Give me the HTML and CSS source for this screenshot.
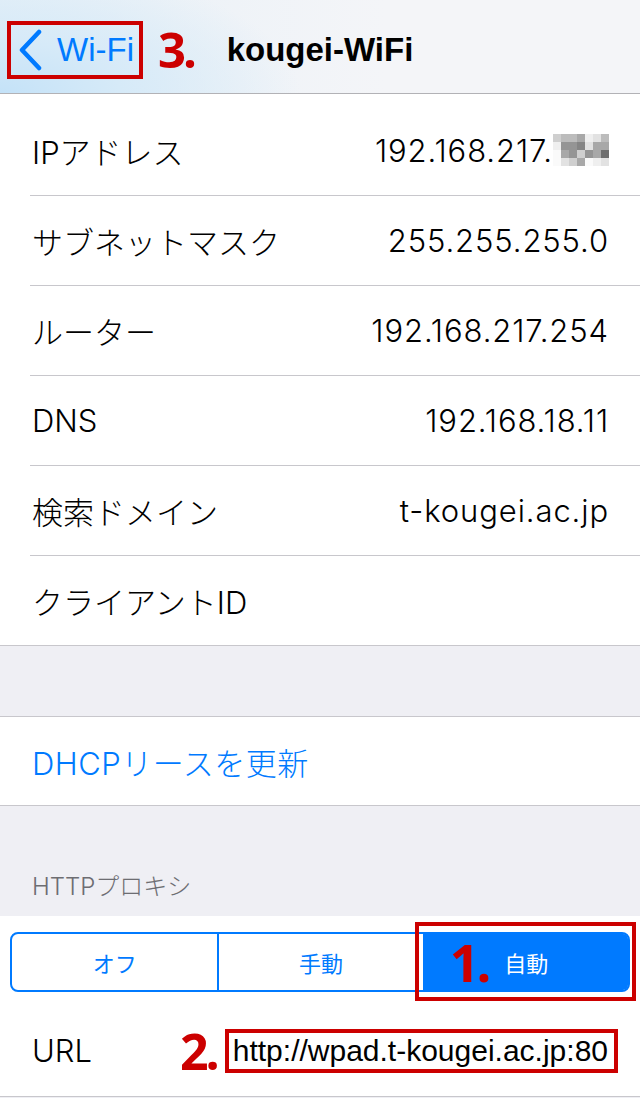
FILE: index.html
```html
<!DOCTYPE html>
<html lang="ja">
<head>
    <meta charset="UTF-8" />
    <title>kougei-WiFi</title>
    <link rel="stylesheet" href="styles.css">
</head>
<body>
    <header class="navbar">
        <div class="nav-left">
            <a class="back" href="#">
                <svg class="chevron" width="26" height="42" viewBox="0 0 26 42">
                    <path d="M22 3 L5 21 L22 39" fill="none" stroke="#007aff" stroke-width="4.5" stroke-linecap="round" stroke-linejoin="round"/>
                </svg>
                <span>Wi-Fi</span>
            </a>
            <span class="step step-nav">3.</span>
        </div>
        <h1 class="nav-title">kougei-WiFi</h1>
        <div></div>
    </header>

    <section class="group info">
        <div class="row">
            <span class="label">IPアドレス</span>
            <span class="value">192.168.217.<span class="mosaic">
                <i class="g2"></i><i class="g3"></i><i class="g3"></i><i class="g4"></i><i class="g0"></i><i class="g1"></i><i class="g3"></i>
                <i class="g0"></i><i class="g5"></i><i class="g5"></i><i class="g6"></i><i class="g1"></i><i class="g4"></i><i class="g4"></i>
                <i class="gw"></i><i class="g4"></i><i class="g5"></i><i class="g2"></i><i class="g5"></i><i class="g4"></i><i class="g7"></i>
                <i class="gw"></i><i class="g1"></i><i class="g2"></i><i class="g4"></i><i class="gw"></i><i class="g0"></i><i class="g1"></i>
            </span></span>
        </div>
        <div class="row">
            <span class="label">サブネットマスク</span>
            <span class="value">255.255.255.0</span>
        </div>
        <div class="row">
            <span class="label">ルーター</span>
            <span class="value">192.168.217.254</span>
        </div>
        <div class="row">
            <span class="label">DNS</span>
            <span class="value">192.168.18.11</span>
        </div>
        <div class="row">
            <span class="label">検索ドメイン</span>
            <span class="value">t-kougei.ac.jp</span>
        </div>
        <div class="row">
            <span class="label">クライアントID</span>
            <span class="value"></span>
        </div>
    </section>

    <section class="group action">
        <div class="row link">DHCPリースを更新</div>
    </section>

    <h2 class="section-header">HTTPプロキシ</h2>

    <section class="group proxy">
        <div class="segment-wrap">
            <div class="segmented">
                <div class="seg">オフ</div>
                <div class="seg">手動</div>
                <div class="seg selected">
                    自動
                    <div class="mark-box"><span class="step step-one">1.</span></div>
                </div>
            </div>
        </div>
        <div class="row url">
            <span class="label">URL</span>
            <span class="url-value">
                <span class="step step-two">2.</span>
                <span class="url-box">http://wpad.t-kougei.ac.jp:80</span>
            </span>
        </div>
    </section>
</body>
</html>
```

FILE: styles.css
```css
body{
    margin:0;
    width:640px;
    background:#efeff4;
    font-family:Inter, "Noto Sans CJK JP", sans-serif;
    color:#000;
}

/* ナビゲーションバー */
.navbar{
    height:94px;
    box-sizing:border-box;
    padding-top:6px;
    display:grid;
    grid-template-columns:1fr auto 1fr;
    align-items:center;
    border-bottom:1px solid #b2b2b6;
    background:
        radial-gradient(ellipse 300px 130px at 0% 100%, #c4e2f8 0%, #d6eaf8 40%, rgba(236,242,247,0) 100%),
        linear-gradient(to right, #e7f0f7, #f4f5f8 60%);
}
.nav-left{
    display:flex;
    align-items:center;
    padding-left:7px;
}
.back{
    display:flex;
    align-items:center;
    height:58px;
    box-sizing:border-box;
    border:4px solid #cc0000;
    padding:0 5px 0 6px;
    color:#007aff;
    text-decoration:none;
    font-size:33px;
    font-family:"Liberation Sans", "Noto Sans CJK JP", sans-serif;
}
.chevron{
    margin-right:14px;
}
.nav-title{
    margin:0;
    font-size:33px;
    font-weight:700;
    font-family:"Liberation Sans", sans-serif;
}

.step{
    color:#cc0000;
    font-family:"Open Sans", sans-serif;
    font-weight:700;
    letter-spacing:-3px;
    line-height:1;
}
.step-nav{
    font-size:49px;
    margin-left:15px;
}

/* リスト */
.group{
    background:#fff;
}
.info{
    padding-top:12px;
    border-bottom:1px solid #c8c7cc;
}
.row{
    height:90px;
    box-sizing:border-box;
    margin-left:30px;
    padding:0 32px 0 2px;
    border-bottom:1px solid #c8c7cc;
    display:flex;
    align-items:center;
    justify-content:space-between;
    font-size:31px;
    font-weight:300;
}
.info .row:last-child{
    height:89px;
    border-bottom:none;
}
.value{
    display:flex;
    align-items:center;
    letter-spacing:0.9px;
    margin-right:-1px;
}
.mosaic{
    display:inline-grid;
    grid-template-columns:repeat(7, 8px);
    grid-auto-rows:8px;
    margin-top:-2px;
}
.mosaic i{ display:block; }
.g0{ background:#efefef; }
.g1{ background:#e2e2e2; }
.g2{ background:#cfcfcf; }
.g3{ background:#bcbcbc; }
.g4{ background:#a8a8a8; }
.g5{ background:#959595; }
.g6{ background:#858585; }
.g7{ background:#6e6e6e; }
.gw{ background:#fafafa; }

.action{
    margin-top:70px;
    border-top:1px solid #c8c7cc;
    border-bottom:1px solid #c8c7cc;
}
.action .row{
    height:88px;
    border-bottom:none;
}
.link{
    color:#007aff;
    letter-spacing:0.5px;
}

.section-header{
    margin:0;
    height:110px;
    box-sizing:border-box;
    padding:0 32px 14px;
    display:flex;
    align-items:flex-end;
    font-size:24px;
    font-weight:300;
    line-height:30px;
    color:#6d6d72;
}

/* HTTPプロキシ */
.proxy{
    border-bottom:1px solid #c8c7cc;
}
.segment-wrap{
    padding:16px 10px 0;
}
.segmented{
    display:grid;
    grid-template-columns:repeat(3, 1fr);
    height:60px;
    box-sizing:border-box;
    border:2px solid #007aff;
    border-radius:8px;
}
.seg{
    display:flex;
    align-items:center;
    justify-content:center;
    color:#007aff;
    font-size:22px;
    font-family:"Noto Sans CJK JP", sans-serif;
    position:relative;
}
.seg + .seg{
    border-left:2px solid #007aff;
}
.seg.selected{
    background:#007aff;
    color:#fff;
    border-radius:0 5px 5px 0;
}
.mark-box{
    position:absolute;
    top:-12px;
    bottom:-11px;
    left:-10px;
    right:-8px;
    border:4px solid #cc0000;
    display:flex;
    align-items:center;
    padding-left:31px;
}
.step-one{
    font-size:52px;
}

.url{
    margin-top:13px;
    height:91px;
    border-bottom:none;
    padding-right:22px;
}
.url-value{
    display:flex;
    align-items:center;
}
.step-two{
    font-size:50px;
    margin-right:8px;
}
.url-box{
    border:4px solid #cc0000;
    padding:0 6px 0 4px;
    height:44px;
    box-sizing:border-box;
    display:flex;
    align-items:center;
    font-size:30px;
    font-family:"Liberation Sans", sans-serif;
}
```
